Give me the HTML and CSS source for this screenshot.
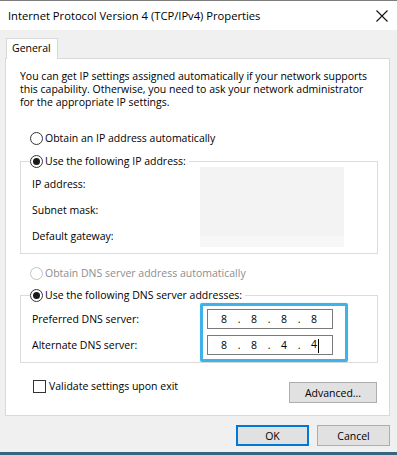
FILE: index.html
```html
<!DOCTYPE html>
<html>
<head>
<meta charset="utf-8">
<title>Internet Protocol Version 4 (TCP/IPv4) Properties</title>
<link rel="stylesheet" href="styles.css">
</head>
<body>
<div class="window">
  <div class="titlebar">
    <span class="title">Internet Protocol Version 4 (TCP/IPv4) Properties</span>
    <svg class="close" width="12" height="12" viewBox="0 0 12 12"><path d="M0.5 0.5 L11.5 11.5 M11.5 0.5 L0.5 11.5" stroke="#111" stroke-width="1.1" fill="none"/></svg>
  </div>
  <div class="client">
    <div class="tabs"><div class="tab">General</div></div>
    <div class="panel">
      <p class="intro">You can get IP settings assigned automatically if your network supports<br>this capability. Otherwise, you need to ask your network administrator<br>for the appropriate IP settings.</p>
      <div class="option first"><span class="radio"></span>Obtain an IP address automatically</div>
      <fieldset class="group ip">
        <legend><span class="radio checked"></span>Use the following IP address:</legend>
        <div class="grid">
          <div class="label">IP address:</div>
          <div class="blur"></div>
          <div class="label">Subnet mask:</div>
          <div class="label">Default gateway:</div>
        </div>
      </fieldset>
      <div class="option disabled dns-auto"><span class="radio"></span>Obtain DNS server address automatically</div>
      <fieldset class="group dns">
        <legend><span class="radio checked"></span>Use the following DNS server addresses:</legend>
        <div class="grid dns-grid">
          <div class="label">Preferred DNS server:</div>
          <div class="ipbox"><span class="seg">8</span><span class="dot">.</span><span class="seg">8</span><span class="dot">.</span><span class="seg">8</span><span class="dot">.</span><span class="seg">8</span></div>
          <div class="label">Alternate DNS server:</div>
          <div class="ipbox"><span class="seg">8</span><span class="dot">.</span><span class="seg">8</span><span class="dot">.</span><span class="seg">4</span><span class="dot">.</span><span class="seg">4<span class="caret"></span></span></div>
          <div class="highlight"></div>
        </div>
      </fieldset>
      <div class="bottom-row">
        <div class="check"><span class="box"></span>Validate settings upon exit</div>
        <div class="btn advanced">Advanced...</div>
      </div>
    </div>
    <div class="buttons">
      <div class="btn default">OK</div>
      <div class="btn">Cancel</div>
    </div>
  </div>
</div>
</body>
</html>
```

FILE: styles.css
```css
* { box-sizing: border-box; }
html, body { margin: 0; padding: 0; }
body {
  width: 397px;
  height: 455px;
  overflow: hidden;
  font-family: "Open Sans", "Noto Sans", sans-serif;
  font-size: 10.5px;
  color: #000;
  background: #f0f0f0;
}
.window {
  height: 455px;
  display: flex;
  flex-direction: column;
  border-top: 1px solid #7d7d7d;
  border-bottom: 3px solid #36657f;
}
.titlebar {
  height: 29px;
  flex: none;
  background: #fff;
  display: flex;
  align-items: center;
  justify-content: space-between;
  padding: 0 9px 0 8px;
}
.title { font-size: 11.2px; }
.close { display: block; }
.client {
  flex: 1;
  padding: 8px 7px 0 5px;
  display: flex;
  flex-direction: column;
}
.tabs {
  display: flex;
  height: 20px;
  position: relative;
  z-index: 1;
}
.tab {
  margin-left: 1px;
  width: 52px;
  height: 21px;
  background: #fff;
  border: 1px solid #d9d9d9;
  border-bottom: none;
  padding-left: 5px;
  line-height: 19px;
}
.panel {
  height: 358px;
  background: #fff;
  border: 1px solid #d9d9d9;
  padding: 11px 11px 0 14px;
}
.intro {
  margin: 0;
  line-height: 13px;
  white-space: nowrap;
}
.option {
  display: flex;
  align-items: center;
  height: 14px;
  margin-left: 10px;
  white-space: nowrap;
}
.option.first { margin-top: 22px; }
.option.dns-auto { margin-top: 12px; }
.option.disabled { color: #8d8d8d; }
.option.disabled .radio { border-color: #c2c2c2; }
.radio {
  flex: none;
  position: relative;
  width: 13px;
  height: 13px;
  border-radius: 50%;
  border: 1px solid #333;
  background: #fff;
  margin-right: 2px;
}
.radio.checked::after {
  content: "";
  position: absolute;
  left: 2px; top: 2px; right: 2px; bottom: 2px;
  border-radius: 50%;
  background: #1a1a1a;
}
.group {
  margin: 9px 0 0 0;
  padding: 3px 0 4px 11px;
  border: 1px solid #dcdcdc;
  min-width: 0;
}
.group.dns { margin-top: 8px; }
.group legend {
  display: flex;
  align-items: center;
  height: 14px;
  padding: 0 3px 0 0;
  margin-left: -2px;
  white-space: nowrap;
}
.grid {
  display: grid;
  grid-template-columns: 168px 1fr;
  grid-auto-rows: 26px;
  align-items: center;
  position: relative;
}
.label { grid-column: 1; white-space: nowrap; }
.blur {
  grid-column: 2;
  grid-row: 1 / 4;
  align-self: stretch;
  margin: -4px 33px 2px 0;
  background: linear-gradient(#f3f3f3 0, #f3f3f3 86%, #f7f7f7 86%, #f7f7f7 100%);
}
.dns-grid { padding-top: 1px; }
.ipbox {
  grid-column: 2;
  margin-left: 7px;
  width: 126px;
  height: 20px;
  border: 1px solid #7a7a7a;
  background: #fff;
  display: flex;
  align-items: center;
  padding-left: 1px;
}
.seg {
  width: 30px;
  text-align: center;
  flex: none;
}
.dot {
  width: 0;
  flex: none;
  display: flex;
  justify-content: center;
  overflow: visible;
}
.caret {
  display: inline-block;
  width: 1px;
  height: 14px;
  background: #000;
  vertical-align: middle;
  margin-left: 1px;
  margin-right: -2px;
}
.highlight {
  position: absolute;
  left: 168px;
  top: -2px;
  width: 148px;
  height: 59px;
  border: 3px solid #3fb2ea;
  border-radius: 2px;
  box-shadow: 0 0 1px rgba(63, 178, 234, 0.6);
  pointer-events: none;
}
.bottom-row {
  display: flex;
  justify-content: space-between;
  align-items: flex-start;
  margin-top: 16px;
  padding-right: 1px;
}
.check {
  display: flex;
  align-items: center;
  height: 14px;
  margin-left: 13px;
  white-space: nowrap;
}
.box {
  width: 13px;
  height: 13px;
  border: 1px solid #333;
  background: #fff;
  margin-right: 3px;
  flex: none;
}
.btn {
  height: 21px;
  width: 73px;
  background: #e1e1e1;
  border: 1px solid #adadad;
  display: flex;
  align-items: center;
  justify-content: center;
}
.btn.advanced {
  width: 88px;
  margin-top: 3px;
}
.btn.default {
  border-color: #0078d7;
  box-shadow: inset 0 0 0 1px #0078d7;
}
.buttons {
  display: flex;
  justify-content: flex-end;
  gap: 8px;
  margin-top: 9px;
}
```
